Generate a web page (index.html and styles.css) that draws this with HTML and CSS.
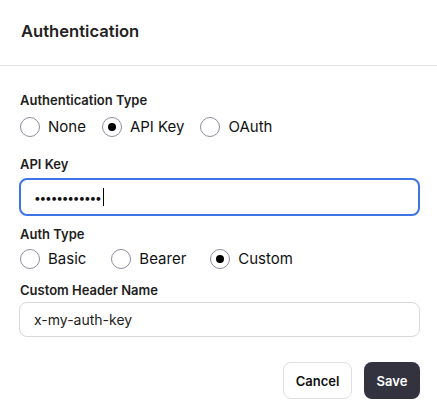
FILE: index.html
```html
<!DOCTYPE html>
<html>
<head>
<meta charset="utf-8">
<link rel="stylesheet" href="styles.css">
</head>
<body>
<div class="dialog">
  <div class="header"><h2 class="title">Authentication</h2></div>
  <div class="body">
    <div class="label l1">Authentication Type</div>
    <div class="radios r1">
      <label class="radio"><span class="circle"></span><span class="rtext">None</span></label>
      <label class="radio"><span class="circle on"></span><span class="rtext">API Key</span></label>
      <label class="radio"><span class="circle"></span><span class="rtext">OAuth</span></label>
    </div>
    <div class="label l2">API Key</div>
    <div class="input focus"><span class="dots">••••••••••••</span><span class="caret"></span></div>
    <div class="label l3">Auth Type</div>
    <div class="radios r2">
      <label class="radio"><span class="circle"></span><span class="rtext">Basic</span></label>
      <label class="radio"><span class="circle"></span><span class="rtext">Bearer</span></label>
      <label class="radio"><span class="circle on"></span><span class="rtext">Custom</span></label>
    </div>
    <div class="label l4">Custom Header Name</div>
    <div class="input plain">x-my-auth-key</div>
    <div class="actions">
      <button class="btn cancel">Cancel</button>
      <button class="btn save">Save</button>
    </div>
  </div>
</div>
</body>
</html>
```
FILE: styles.css
```css
* { box-sizing: border-box; }
html, body { margin: 0; padding: 0; background: #fff; }
body { font-family: Inter, "Noto Sans", sans-serif; color: #1a1a1a; width: 437px; }
.header { height: 66px; border-bottom: 1px solid #e4e4e4; padding: 20px 21px 0; }
.title { margin: 0; font-size: 16.6px; font-weight: 600; line-height: 22px; color: #222; }
.body { padding: 0 17px 0 19px; display: flex; flex-direction: column; }
.label { font-size: 13px; font-weight: 600; line-height: 18px; color: #1e1e1e; padding-left: 1px; }
.l1 { margin-top: 25px; }
.l2 { margin-top: 18px; }
.l3 { margin-top: 9px; }
.l4 { margin-top: 12px; }
.radios { display: flex; align-items: center; height: 20px; margin-top: 8px; }
.r2 { margin-top: 6px; }
.radio { display: flex; align-items: center; font-size: 15px; line-height: 20px; color: #111; }
.circle { width: 20px; height: 20px; border: 1px solid #8f8b9d; border-radius: 50%; display: flex; align-items: center; justify-content: center; margin-left: 1px; }
.circle.on::after { content: ""; width: 8px; height: 8px; border-radius: 50%; background: #000; }
.rtext { margin-left: 8px; }
.r1 .radio + .radio { margin-left: 15px; }
.r2 .radio + .radio { margin-left: 24px; }
.r2 .radio:nth-child(3) { margin-left: 23px; }
.input { height: 38px; border-radius: 8px; display: flex; align-items: center; padding-left: 13px; font-size: 14px; }
.focus { margin-top: 5px; border: 2px solid #3d74e8; }
.dots { font-size: 12px; letter-spacing: -1.2px; color: #111; }
.caret { width: 1px; height: 18px; background: #000; margin-left: 2px; }
.plain { margin-top: 3px; height: 35px; border: 1px solid #d8d8dc; padding-left: 14px; color: #222; }
.actions { display: flex; justify-content: flex-end; gap: 12px; margin-top: 25px; }
.btn { height: 37px; border-radius: 8px; font-family: inherit; font-size: 13px; font-weight: 600; padding: 0; }
.cancel { width: 69px; background: #fff; border: 1px solid #e0e0e0; color: #111; }
.save { width: 56px; background: #33333f; border: none; color: #fff; }
```
